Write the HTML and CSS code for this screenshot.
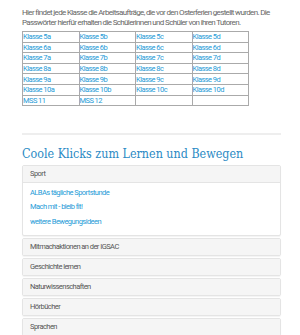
FILE: index.html
```html
<!DOCTYPE html>
<html>
<head>
	<meta charset="UTF-8">
	<title>Coole Klicks</title>
	<link rel="stylesheet" href="styles.css">
</head>
<body>
	<div class="content">
		<p class="intro">Hier findet jede Klasse die Arbeitsaufträge, die vor den Osterferien gestellt wurden. Die Passwörter hierfür erhalten die Schülerinnen und Schüler von ihren Tutoren.</p>
		<table class="klassen">
			<tr><td><a href="#">Klasse 5a</a></td><td><a href="#">Klasse 5b</a></td><td><a href="#">Klasse 5c</a></td><td><a href="#">Klasse 5d</a></td></tr>
			<tr><td><a href="#">Klasse 6a</a></td><td><a href="#">Klasse 6b</a></td><td><a href="#">Klasse 6c</a></td><td><a href="#">Klasse 6d</a></td></tr>
			<tr><td><a href="#">Klasse 7a</a></td><td><a href="#">Klasse 7b</a></td><td><a href="#">Klasse 7c</a></td><td><a href="#">Klasse 7d</a></td></tr>
			<tr><td><a href="#">Klasse 8a</a></td><td><a href="#">Klasse 8b</a></td><td><a href="#">Klasse 8c</a></td><td><a href="#">Klasse 8d</a></td></tr>
			<tr><td><a href="#">Klasse 9a</a></td><td><a href="#">Klasse 9b</a></td><td><a href="#">Klasse 9c</a></td><td><a href="#">Klasse 9d</a></td></tr>
			<tr><td><a href="#">Klasse 10a</a></td><td><a href="#">Klasse 10b</a></td><td><a href="#">Klasse 10c</a></td><td><a href="#">Klasse 10d</a></td></tr>
			<tr><td><a href="#">MSS 11</a></td><td><a href="#">MSS 12</a></td><td></td><td></td></tr>
		</table>

		<hr class="trenner">

		<h2 class="titel">Coole Klicks zum Lernen und Bewegen</h2>

		<div class="panel-group">
			<div class="panel">
				<div class="panel-heading">Sport</div>
				<div class="panel-body">
					<a href="#">ALBAs tägliche Sportstunde</a>
					<a href="#">Mach mit - bleib fit!</a>
					<a href="#">weitere Bewegungsideen</a>
				</div>
			</div>
			<div class="panel"><div class="panel-heading">Mitmachaktionen an der IGSAC</div></div>
			<div class="panel"><div class="panel-heading">Geschichte lernen</div></div>
			<div class="panel"><div class="panel-heading">Naturwissenschaften</div></div>
			<div class="panel"><div class="panel-heading">Hörbücher</div></div>
			<div class="panel"><div class="panel-heading">Sprachen</div></div>
		</div>
	</div>
</body>
</html>
```

FILE: styles.css
```css
body {
	margin : 0;
	background-color : #fff;
	font-family : Roboto, "Liberation Sans", sans-serif;
	font-size : 7.5px;
	letter-spacing : -0.55px;
	color : #666;
}
a {
	color : #1e9bd7;
	text-decoration : none;
}
.content {
	padding : 8px 19px 0 22px;
}
.intro {
	margin : 0 0 3px 0;
	line-height : 10px;
	font-size : 8px;
	letter-spacing : -0.65px;
}
table.klassen {
	border-collapse : collapse;
	width : 227px;
	border : 1px solid #888;
}
table.klassen td {
	width : 25%;
	height : 9.6px;
	padding : 0;
	border : 1px solid #aaa;
	line-height : 9px;
	vertical-align : middle;
}
hr.trenner {
	border : 0;
	border-top : 2px solid #eee;
	margin : 27px 0 0 0;
}
h2.titel {
	font-family : "DejaVu Serif Condensed", "DejaVu Serif", serif;
	font-weight : normal;
	font-size : 12.4px;
	letter-spacing : 0;
	color : #2a8ac4;
	margin : 11px 0 4px 0;
}
.panel-group {
	display : flex;
	flex-direction : column;
	gap : 2px;
}
.panel {
	border : 1px solid #e4e4e4;
	border-radius : 2px;
	box-shadow : 0 1px 1px rgba(0,0,0,0.05);
	background-color : #fff;
}
.panel-heading {
	background-color : #f5f5f5;
	color : #555;
	padding : 0 7px;
	height : 16px;
	line-height : 16px;
}
.panel-body {
	border-top : 1px solid #e4e4e4;
	padding : 5px 7px 8px 7px;
	display : flex;
	flex-direction : column;
	gap : 4.3px;
	line-height : 10px;
}
```
